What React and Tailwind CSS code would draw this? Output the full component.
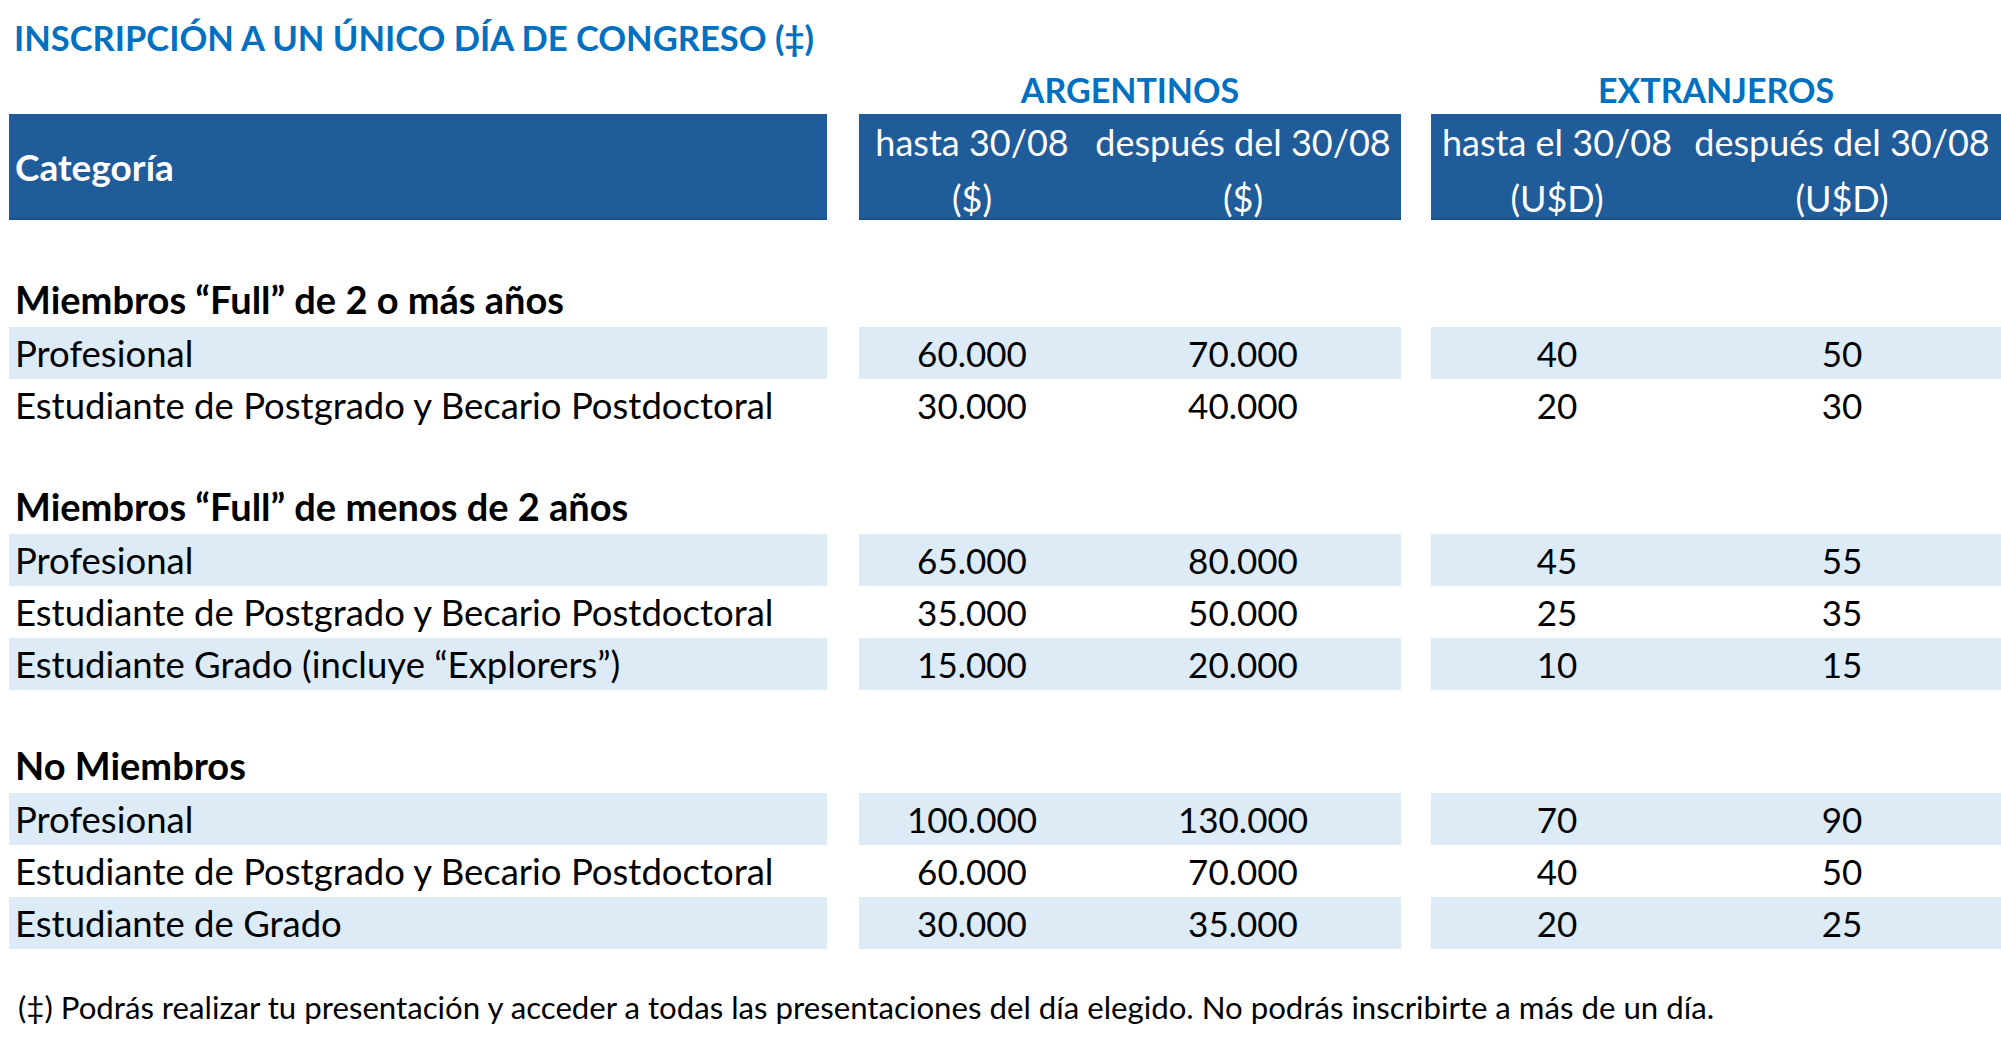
import React from 'react';

const sections = [
    {
        title: 'Miembros “Full” de 2 o más años',
        rows: [
            { label: 'Profesional', values: ['60.000', '70.000', '40', '50'], shaded: true },
            { label: 'Estudiante de Postgrado y Becario Postdoctoral', values: ['30.000', '40.000', '20', '30'] },
        ],
    },
    {
        title: 'Miembros “Full” de menos de 2 años',
        rows: [
            { label: 'Profesional', values: ['65.000', '80.000', '45', '55'], shaded: true },
            { label: 'Estudiante de Postgrado y Becario Postdoctoral', values: ['35.000', '50.000', '25', '35'] },
            { label: 'Estudiante Grado (incluye “Explorers”)', values: ['15.000', '20.000', '10', '15'], shaded: true },
        ],
    },
    {
        title: 'No Miembros',
        rows: [
            { label: 'Profesional', values: ['100.000', '130.000', '70', '90'], shaded: true },
            { label: 'Estudiante de Postgrado y Becario Postdoctoral', values: ['60.000', '70.000', '40', '50'] },
            { label: 'Estudiante de Grado', values: ['30.000', '35.000', '20', '25'], shaded: true },
        ],
    },
];

function PriceRow({ label, values, shaded }) {
    const bg = shaded ? 'bg-[#ddebf7]' : '';
    return (
        <div className="flex h-[52px] pl-[9px] text-black">
            <div className={`w-[818px] pl-[6px] pt-[2px] text-[36.5px] leading-[48px] whitespace-nowrap ${bg}`}>{label}</div>
            <div className={`ml-[32px] w-[542px] flex pt-[2px] text-[35px] leading-[48px] text-center ${bg}`}>
                <div className="w-[226px]">{values[0]}</div>
                <div className="w-[316px]">{values[1]}</div>
            </div>
            <div className={`ml-[30px] w-[570px] flex pt-[2px] text-[35px] leading-[48px] text-center ${bg}`}>
                <div className="w-[252px]">{values[2]}</div>
                <div className="w-[318px]">{values[3]}</div>
            </div>
        </div>
    );
}

export default function App() {
    return (
        <div className="w-[2001px] h-[1047px] bg-white overflow-hidden font-['Lato','Liberation_Sans',sans-serif]">
            {/* Title */}
            <div className="pt-[16px] pl-[14px] h-[60px] text-[34.5px] leading-[44px] font-bold text-[#0070c0] whitespace-nowrap">
                INSCRIPCIÓN A UN ÚNICO DÍA DE CONGRESO (‡)
            </div>

            {/* Group labels */}
            <div className="flex h-[54px] items-end pb-[4px] pl-[9px] text-[34px] leading-[40px] font-bold text-[#0070c0]">
                <div className="w-[818px]" />
                <div className="ml-[32px] w-[542px] text-center">ARGENTINOS</div>
                <div className="ml-[30px] w-[570px] text-center">EXTRANJEROS</div>
            </div>

            {/* Header */}
            <div className="flex h-[106px] pl-[9px] text-[36px] text-white">
                <div className="w-[818px] flex items-center pl-[6px] pt-[2px] text-[37px] font-bold bg-[#1f5c99] border-b-2 border-[#1b5088]">
                    Categoría
                </div>
                <div className="ml-[32px] w-[542px] flex leading-[56px] text-center bg-[#1f5c99] border-b-2 border-[#1b5088]">
                    <div className="w-[226px] whitespace-nowrap">hasta 30/08<br />($)</div>
                    <div className="w-[316px] whitespace-nowrap">después del 30/08<br />($)</div>
                </div>
                <div className="ml-[30px] w-[570px] flex leading-[56px] text-center bg-[#1f5c99] border-b-2 border-[#1b5088]">
                    <div className="w-[252px] whitespace-nowrap">hasta el 30/08<br />(U$D)</div>
                    <div className="w-[318px] whitespace-nowrap">después del 30/08<br />(U$D)</div>
                </div>
            </div>

            {sections.map((section, i) => (
                <div key={section.title} className={i === 0 ? 'pt-[55px]' : 'pt-[51px]'}>
                    <div className="h-[52px] pl-[15px] text-[38px] leading-[48px] font-bold text-black whitespace-nowrap">
                        {section.title}
                    </div>
                    {section.rows.map((row, j) => (
                        <PriceRow key={j} {...row} />
                    ))}
                </div>
            ))}

            {/* Footnote */}
            <div className="pt-[39px] pl-[18px] text-[31.2px] leading-[38px] text-black whitespace-nowrap">
                (‡) Podrás realizar tu presentación y acceder a todas las presentaciones del día elegido. No podrás inscribirte a más de un día.
            </div>
        </div>
    );
}
